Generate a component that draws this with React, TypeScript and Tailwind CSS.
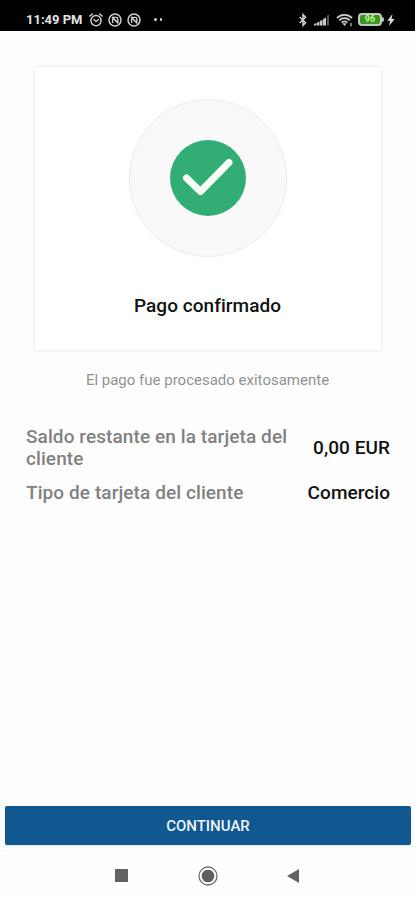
import type { ReactNode } from "react";

interface DetailRowProps {
  label: ReactNode;
  value: string;
}

function MutedIcon() {
  return (
    <svg width="14" height="14" viewBox="0 0 14 14" fill="none" stroke="#d0d0d0">
      <circle cx="7" cy="7" r="6" strokeWidth="1.5" />
      <path d="M4.6 10V5.4M4.8 4.4h3.4q1.6 0 1.6 1.6v3" strokeWidth="1.4" />
      <path d="M4 4l6.4 6.4" strokeWidth="1.6" />
    </svg>
  );
}

function AlarmIcon() {
  return (
    <svg width="14" height="14" viewBox="0 0 14 14" fill="none" stroke="#d0d0d0" strokeLinecap="round">
      <circle cx="7" cy="7.6" r="5.1" strokeWidth="1.5" />
      <path d="M.9 3L3.4 1M13.1 3L10.6 1" strokeWidth="1.6" />
      <path d="M4.8 6.6L7 8.4l2.4-1.7" strokeWidth="1.3" />
    </svg>
  );
}

function StatusBar() {
  return (
    <div className="flex h-[31px] shrink-0 items-center bg-black pt-2 pl-[26px] text-[#e4e4e4]">
      <span className="w-[63px] text-[13px] leading-4 font-bold whitespace-nowrap">11:49 PM</span>
      <div className="flex items-center gap-[5px]">
        <AlarmIcon />
        <MutedIcon />
        <MutedIcon />
      </div>
      <div className="ml-[13px] flex gap-[3px]">
        <span className="size-[2.5px] rounded-full bg-[#d6d6d6]" />
        <span className="size-[2.5px] rounded-full bg-[#d6d6d6]" />
      </div>
      <div className="mr-[20px] ml-auto flex items-center">
        {/* Bluetooth */}
        <svg className="mr-[6px]" width="10" height="14" viewBox="0 0 10 14" fill="none" stroke="#d0d0d0" strokeWidth="1.5">
          <path d="M1.6 4l6 5.8L5 12.4V1.6l2.6 2.6-6 5.8" />
        </svg>
        {/* Signal */}
        <svg className="mr-[6px]" width="16" height="12" viewBox="0 0 16 12" fill="#c8c8c8">
          <path d="M0 11.5V10l2.5-1v2.5zM3 11.5V8.7l2.5-1.1v3.9zM6 11.5V7l2.5-1.3v5.8zM9 11.5V5.2l3-1.7v8z" />
          <path d="M13 11.5V1.7l2-1.2v11z" fill="#555" />
        </svg>
        {/* Wifi */}
        <svg className="mr-[5px]" width="17" height="14" viewBox="0 0 17 14" fill="none" stroke="#cdcdcd" strokeWidth="1.8">
          <path d="M1 5a10.5 10.5 0 0 1 15 0M3.3 7.3a7.2 7.2 0 0 1 10.4 0M5.6 9.6a4 4 0 0 1 5.8 0" />
          <path d="M6.3 10.2L8.5 13l2.2-2.8z" fill="#cdcdcd" stroke="none" />
          <path d="M15 10v3.3" strokeWidth="1.2" />
        </svg>
        <div className="flex items-center">
          <div className="flex h-[13px] w-[24px] items-center justify-center rounded-[4px] border-2 border-[#c3c8c0] bg-[#39961c] text-[9px] leading-none font-bold text-[#c2f2a4]">
            96
          </div>
          <span className="h-[5px] w-[2px] rounded-r-sm bg-[#c3c8c0]" />
        </div>
        <svg className="ml-[3px]" width="8" height="12" viewBox="0 0 8 12" fill="#dedede">
          <path d="M5.5 0L.3 6.7h2.9L2 12l5.7-7H4.5z" />
        </svg>
      </div>
    </div>
  );
}

function ConfirmationCard() {
  return (
    <div className="mx-auto flex h-[287px] w-[350px] shrink-0 flex-col items-center rounded-[3px] border-2 border-[#f5f5f5] bg-white pt-[32px]">
      <div className="flex size-[158px] items-center justify-center rounded-full border border-[#ececec] bg-[#f9f9f9]">
        <svg width="76" height="76" viewBox="0 0 76 76" fill="none">
          <circle cx="38" cy="38" r="38" fill="#32ad75" />
          <path d="M16.5 38l14 13.5 28.5-29" stroke="#f8fff8" strokeWidth="7" strokeLinecap="round" strokeLinejoin="round" />
        </svg>
      </div>
      <h1 className="mt-[37px] text-[19px] leading-6 font-medium tracking-[0.04px] whitespace-nowrap text-[#111]">Pago confirmado</h1>
    </div>
  );
}

function DetailRow({ label, value }: DetailRowProps) {
  return (
    <div className="flex items-center justify-between text-[19px] leading-[22px] font-medium whitespace-nowrap">
      <span className="tracking-[0.09px] text-[#818181]">{label}</span>
      <span className="tracking-[0.05px] text-[#111]">{value}</span>
    </div>
  );
}

function NavigationBar() {
  return (
    <div className="flex h-[49px] shrink-0 items-center border-t border-[#f7f7f7] pb-px pl-[115px]">
      <span className="size-[13px] bg-[#626262]" />
      <svg className="ml-[70px]" width="20" height="20" viewBox="0 0 20 20">
        <circle cx="10" cy="10" r="9" fill="none" stroke="#6b6b6b" strokeWidth="1.3" />
        <circle cx="10" cy="10" r="6.3" fill="#5e5e5e" />
      </svg>
      <svg className="ml-[69px]" width="12" height="14" viewBox="0 0 12 14">
        <path d="M12 0v14L0 7z" fill="#626262" />
      </svg>
    </div>
  );
}

export default function App() {
  return (
    <div className="flex h-[900px] w-[415px] flex-col overflow-hidden bg-[#fefefe] font-['Roboto',sans-serif]">
      <StatusBar />
      <main className="flex flex-1 flex-col pt-[34px]">
        <ConfirmationCard />
        <p className="mt-[18px] text-center text-[15px] leading-5 text-[#929292]">El pago fue procesado exitosamente</p>
        <div className="mt-[36px] flex flex-col gap-3 pr-[25px] pl-[26px]">
          <DetailRow label={<>Saldo restante en la tarjeta del<br />cliente</>} value="0,00 EUR" />
          <DetailRow label="Tipo de tarjeta del cliente" value="Comercio" />
        </div>
      </main>
      <button className="mr-[4px] mb-[6px] ml-[5px] h-[39px] shrink-0 rounded-[2px] bg-[#10588f] pt-px text-[15px] font-medium text-[#eef6fa] shadow-sm">
        CONTINUAR
      </button>
      <NavigationBar />
    </div>
  );
}
